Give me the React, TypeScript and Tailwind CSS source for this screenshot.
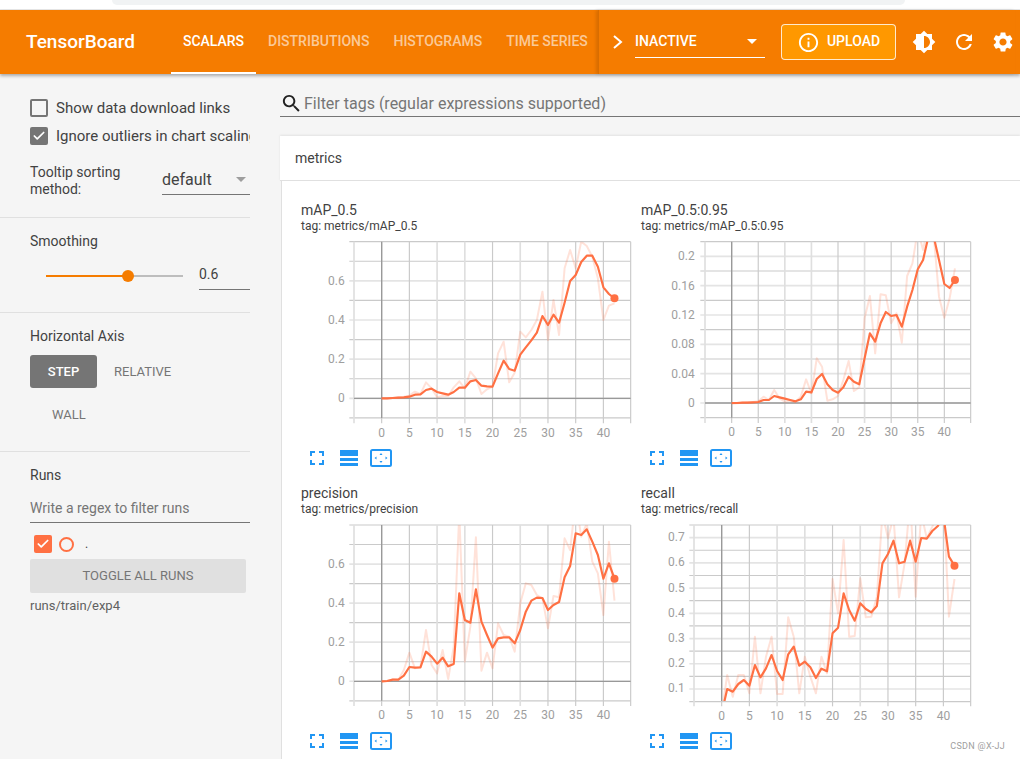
import { Check } from 'lucide-react'

const font = { fontFamily: 'Roboto, sans-serif' }

type ChartSpec = {
  title: string
  tag: string
  top: number
  x0: number
  step: number
  left: number
  right: number
  bottom: number
  gridTop: number
  gridGap: number
  gridCount: number
  xTicks: number[]
  yTicks: { label: string; y: number }[]
  smooth: number[]
  raw: number[]
}

const chartA: ChartSpec = {
  title: 'mAP_0.5',
  tag: 'tag: metrics/mAP_0.5',
  top: 150,
  x0: 275,
  step: 16.63,
  left: 192,
  right: 1022,
  bottom: 684,
  gridTop: 155,
  gridGap: 58.75,
  gridCount: 10,
  xTicks: [0, 5, 10, 15, 20, 25, 30, 35, 40],
  yTicks: [
    { label: '0.6', y: 273 },
    { label: '0.4', y: 391 },
    { label: '0.2', y: 508 },
    { label: '0', y: 625 },
  ],
  smooth: [625, 625, 624, 623, 622, 620, 614, 613, 600, 596, 606, 610, 614, 606, 593, 593, 574, 570, 587, 589, 590, 550, 512, 537, 542, 494, 472, 451, 428, 378, 405, 374, 398, 338, 273, 255, 216, 197, 197, 230, 292, 312, 325],
  raw: [625, 625, 624, 622, 620, 617, 605, 612, 577, 595, 622, 618, 618, 592, 574, 595, 545, 565, 612, 598, 590, 490, 455, 577, 548, 425, 442, 420, 390, 305, 450, 330, 435, 235, 180, 235, 155, 168, 200, 265, 390, 347, 340],
}

const chartB: ChartSpec = {
  title: 'mAP_0.5:0.95',
  tag: 'tag: metrics/mAP_0.5:0.95',
  top: 150,
  x0: 275,
  step: 15.95,
  left: 195,
  right: 992,
  bottom: 683,
  gridTop: 155,
  gridGap: 44,
  gridCount: 13,
  xTicks: [0, 5, 10, 15, 20, 25, 30, 35, 40],
  yTicks: [
    { label: '0.2', y: 199 },
    { label: '0.16', y: 287 },
    { label: '0.12', y: 375 },
    { label: '0.08', y: 463 },
    { label: '0.04', y: 551 },
    { label: '0', y: 639 },
  ],
  smooth: [639, 639, 638, 638, 637, 636, 630, 630, 618, 622, 626, 630, 634, 628, 605, 607, 567, 552, 583, 600, 608, 592, 560, 575, 583, 505, 430, 455, 400, 366, 378, 375, 410, 350, 300, 238, 210, 140, 140, 210, 282, 294, 270],
  raw: [641, 640, 638, 637, 636, 634, 620, 630, 600, 625, 635, 632, 636, 620, 568, 610, 505, 530, 632, 628, 618, 570, 513, 603, 592, 385, 318, 490, 313, 316, 400, 370, 458, 258, 220, 120, 180, 100, 135, 320, 383, 325, 235],
}

const chartC: ChartSpec = {
  title: 'precision',
  tag: 'tag: metrics/precision',
  top: 129,
  x0: 275,
  step: 16.63,
  left: 192,
  right: 1022,
  bottom: 662,
  gridTop: 135,
  gridGap: 58.6,
  gridCount: 10,
  xTicks: [0, 5, 10, 15, 20, 25, 30, 35, 40],
  yTicks: [
    { label: '0.6', y: 252 },
    { label: '0.4', y: 369 },
    { label: '0.2', y: 487 },
    { label: '0', y: 604 },
  ],
  smooth: [604, 603, 599, 599, 587, 561, 563, 562, 515, 530, 551, 533, 559, 552, 340, 420, 428, 328, 425, 465, 503, 475, 472, 472, 490, 450, 395, 362, 353, 354, 390, 375, 366, 292, 258, 160, 165, 148, 185, 225, 296, 250, 296],
  raw: [604, 603, 598, 600, 570, 518, 565, 560, 450, 555, 580, 510, 597, 500, 100, 545, 440, 172, 572, 518, 565, 430, 465, 470, 515, 370, 310, 315, 345, 355, 445, 348, 352, 175, 210, 60, 170, 130, 245, 280, 405, 185, 362],
}

const chartD: ChartSpec = {
  title: 'recall',
  tag: 'tag: metrics/recall',
  top: 129,
  x0: 245,
  step: 16.63,
  left: 162,
  right: 992,
  bottom: 663,
  gridTop: 135,
  gridGap: 37.85,
  gridCount: 15,
  xTicks: [0, 5, 10, 15, 20, 25, 30, 35, 40],
  yTicks: [
    { label: '0.7', y: 171 },
    { label: '0.6', y: 247 },
    { label: '0.5', y: 323 },
    { label: '0.4', y: 398 },
    { label: '0.3', y: 474 },
    { label: '0.2', y: 550 },
    { label: '0.1', y: 625 },
  ],
  smooth: [700, 627, 635, 612, 600, 617, 555, 592, 565, 525, 573, 600, 523, 500, 557, 545, 562, 594, 566, 574, 460, 443, 340, 390, 422, 370, 387, 397, 378, 250, 222, 182, 250, 245, 182, 245, 174, 176, 153, 138, 105, 230, 257],
  raw: [700, 585, 650, 585, 585, 640, 470, 640, 530, 470, 642, 642, 412, 470, 640, 530, 590, 640, 530, 580, 297, 400, 180, 470, 468, 295, 412, 410, 350, 100, 175, 110, 352, 250, 60, 350, 100, 175, 140, 100, 60, 410, 297],
}

// index into the vertical grid lines that come out pale and wide in the screenshot
const paleVerticals = [0, 3, 4, 6]

function Chart({ spec, second }: { spec: ChartSpec; second?: boolean }) {
  const xOf = (i: number) => spec.x0 + i * spec.step
  const toPoints = (values: number[]) => values.map((y, i) => `${xOf(i).toFixed(1)},${y}`).join(' ')
  const clipId = `clip-${spec.title.replace(/[^a-z0-9]/gi, '')}`
  const verticals = [spec.left, ...spec.xTicks.map((t) => xOf(t)), spec.right]
  const horizontals = Array.from({ length: spec.gridCount }, (_, i) => spec.gridTop + i * spec.gridGap)
  const labeled = spec.yTicks.map((t) => t.y)
  const last = spec.smooth.length - 1
  const lastLabel = labeled[labeled.length - 1]

  return (
    <div className="h-[283px]">
      <div className="pl-[10px] pt-[21px]">
        <div className="text-[14px] leading-[16px] text-[#424242]">{spec.title}</div>
        <div className="text-[12px] leading-[15px] mt-[1px] text-[#424242]">{spec.tag}</div>
      </div>
      <svg
        width={350}
        height={200}
        viewBox={`0 ${spec.top} 1050 600`}
        className={second ? 'block ml-[9px] mt-[6px]' : 'block -ml-[1px] mt-[6px]'}
      >
        <defs>
          <clipPath id={clipId}>
            <rect x={spec.left} y={spec.gridTop} width={spec.right - spec.left} height={spec.bottom - spec.gridTop} />
          </clipPath>
        </defs>
        {horizontals.map((y) => {
          const major = labeled.some((l) => Math.abs(l - y) < 3)
          return (
            <line
              key={y}
              x1={spec.left - 14}
              x2={spec.right}
              y1={y}
              y2={y}
              stroke={major ? '#e4e4e4' : '#cacaca'}
              strokeWidth={major ? 5 : 3.5}
            />
          )
        })}
        {verticals.map((x, i) => {
          const pale = paleVerticals.includes(i)
          return (
            <line
              key={x}
              x1={x}
              x2={x}
              y1={spec.gridTop}
              y2={spec.bottom + 16}
              stroke={pale ? '#dfdfdf' : '#cacaca'}
              strokeWidth={pale ? 5 : 3.5}
            />
          )
        })}
        <line x1={spec.x0} x2={spec.x0} y1={spec.gridTop} y2={spec.bottom} stroke="#999" strokeWidth={4} />
        {spec.title !== 'recall' && (
          <line x1={spec.left} x2={spec.right} y1={lastLabel} y2={lastLabel} stroke="#999" strokeWidth={4} />
        )}
        <g clipPath={`url(#${clipId})`}>
          <polyline points={toPoints(spec.raw)} fill="none" stroke="#ff7043" strokeOpacity={0.2} strokeWidth={6} strokeLinejoin="round" />
          <polyline points={toPoints(spec.smooth)} fill="none" stroke="#ff7043" strokeWidth={6.5} strokeLinejoin="round" />
        </g>
        <circle cx={xOf(last)} cy={spec.smooth[last]} r={12} fill="#ff7043" />
        {spec.yTicks.map((t) => (
          <text key={t.label} x={spec.x0 - 111} y={t.y + 12} textAnchor="end" fontSize={36} fill="#9e9e9e">
            {t.label}
          </text>
        ))}
        {spec.xTicks.map((t) => (
          <text key={t} x={xOf(t)} y={spec.bottom + 56} textAnchor="middle" fontSize={36} fill="#9e9e9e">
            {t}
          </text>
        ))}
      </svg>
      <div className="flex items-center pl-[19px] h-[20px] mt-[8px]">
        <svg width={14} height={14} viewBox="0 0 14 14" fill="none" stroke="#2196f3" strokeWidth={2}>
          <path d="M1 5V1h4M9 1h4v4M13 9v4H9M5 13H1V9" />
        </svg>
        <svg width={18} height={16} viewBox="0 0 18 16" fill="#2196f3" className="ml-[16px]">
          <rect x={0} y={0} width={18} height={6} />
          <rect x={0} y={8} width={18} height={3} />
          <rect x={0} y={13} width={18} height={3} />
        </svg>
        <svg width={22} height={18} viewBox="0 0 22 18" fill="none" className="ml-[12px]">
          <rect x={1} y={1} width={20} height={16} rx={1.5} stroke="#2196f3" strokeWidth={2} />
          <path d="M11 4l1.5 2h-3zM11 14l-1.5-2h3zM4.5 9l2-1.5v3zM17.5 9l-2 1.5v-3z" fill="#2196f3" />
        </svg>
      </div>
    </div>
  )
}

export default function App() {
  return (
    <div className="relative w-[1020px] h-[759px] overflow-hidden bg-[#f5f5f5]" style={font}>
      <div className="h-[10px] bg-white border-b border-[#e8e8e8] pl-[112px] pr-[115px]">
        <div className="h-[5px] bg-[#f1f3f4] rounded-b-[10px]" />
      </div>

      <header className="relative z-10 h-[64px] bg-[#f57c00] text-white flex items-center shadow-[0_2px_3px_rgba(0,0,0,0.3)]">
        <div className="text-[19px] font-medium pl-[26px] w-[171px]">TensorBoard</div>
        <nav className="flex h-full text-[14px] font-medium w-[427px]">
          <div className="relative w-[85px] flex items-center justify-center pb-[2px]">
            SCALARS
            <div className="absolute left-0 right-0 bottom-0 h-[2px] bg-white" />
          </div>
          <div className="ml-[12px] flex items-center pb-[2px] text-white/60">DISTRIBUTIONS</div>
          <div className="ml-[24px] flex items-center pb-[2px] text-white/60">HISTOGRAMS</div>
          <div className="ml-[24px] flex items-center pb-[2px] text-white/60">TIME SERIES</div>
        </nav>
        <div className="h-full flex items-center border-l border-[#d96d00] shadow-[-2px_0_3px_rgba(0,0,0,0.12)] pl-[12px]">
          <svg width={14} height={16} viewBox="0 0 14 16" fill="none" stroke="white" strokeWidth={2}>
            <path d="M3 2l7 6-7 6" />
          </svg>
          <div className="ml-[10px] w-[130px] h-[32px] border-b border-white flex items-center justify-between pr-[4px] text-[14px] font-medium mb-[1px]">
            INACTIVE
            <div className="w-0 h-0 border-l-[5px] border-r-[5px] border-t-[5px] border-l-transparent border-r-transparent border-t-white mr-[4px]" />
          </div>
          <button className="ml-[16px] w-[115px] h-[36px] bg-[#ff9800] border border-white/80 rounded-[4px] flex items-center justify-center gap-[7px] text-[14px] font-medium">
            <svg width={23} height={23} viewBox="0 0 24 24" fill="white">
              <path d="M11 7h2v2h-2zm0 4h2v6h-2zm1-9C6.48 2 2 6.48 2 12s4.48 10 10 10 10-4.48 10-10S17.52 2 12 2zm0 18c-4.41 0-8-3.59-8-8s3.59-8 8-8 8 3.59 8 8-3.59 8-8 8z" />
            </svg>
            <span className="pb-[2px]">UPLOAD</span>
          </button>
          <svg width={24} height={24} viewBox="0 0 24 24" fill="white" className="ml-[16px]">
            <path d="M20 15.31L23.31 12 20 8.69V4h-4.69L12 .69 8.69 4H4v4.69L.69 12 4 15.31V20h4.69L12 23.31 15.31 20H20v-4.69zM12 18V6c3.31 0 6 2.69 6 6s-2.69 6-6 6z" />
          </svg>
          <svg width={24} height={24} viewBox="0 0 24 24" fill="white" className="ml-[16px]">
            <path d="M17.65 6.35C16.2 4.9 14.21 4 12 4c-4.42 0-7.99 3.58-7.99 8s3.57 8 7.99 8c3.73 0 6.84-2.55 7.73-6h-2.08c-.82 2.33-3.04 4-5.65 4-3.31 0-6-2.69-6-6s2.69-6 6-6c1.66 0 3.14.69 4.22 1.78L13 11h7V4l-2.35 2.35z" />
          </svg>
          <svg width={24} height={24} viewBox="0 0 24 24" fill="white" className="ml-[15px] shrink-0">
            <path d="M19.14 12.94c.04-.3.06-.61.06-.94 0-.32-.02-.64-.07-.94l2.03-1.58c.18-.14.23-.41.12-.61l-1.92-3.32c-.12-.22-.37-.29-.59-.22l-2.39.96c-.5-.38-1.03-.7-1.62-.94l-.36-2.54c-.04-.24-.24-.41-.48-.41h-3.84c-.24 0-.43.17-.47.41l-.36 2.54c-.59.24-1.13.57-1.62.94l-2.39-.96c-.22-.08-.47 0-.59.22L2.74 8.87c-.12.21-.08.47.12.61l2.03 1.58c-.05.3-.09.63-.09.94s.02.64.07.94l-2.03 1.58c-.18.14-.23.41-.12.61l1.92 3.32c.12.22.37.29.59.22l2.39-.96c.5.38 1.03.7 1.62.94l.36 2.54c.05.24.24.41.48.41h3.84c.24 0 .44-.17.47-.41l.36-2.54c.59-.24 1.13-.56 1.62-.94l2.39.96c.22.08.47 0 .59-.22l1.92-3.32c.12-.22.07-.47-.12-.61l-2.01-1.58zM12 15.6c-1.98 0-3.6-1.62-3.6-3.6s1.62-3.6 3.6-3.6 3.6 1.62 3.6 3.6-1.62 3.6-3.6 3.6z" />
          </svg>
        </div>
      </header>

      <div className="flex h-[685px]">
        <aside className="w-[250px] shrink-0 text-[#424242] text-[14px]">
          <div className="pl-[30px] pt-[25px] h-[144px] border-b border-[#e0e0e0]">
            <div className="flex items-center h-[18px] gap-[8px]">
              <div className="w-[18px] h-[18px] border-2 border-[#757575] rounded-[2px]" />
              <span className="text-[15px]">Show data download links</span>
            </div>
            <div className="flex items-center h-[18px] gap-[8px] mt-[10px] overflow-hidden">
              <div className="w-[18px] h-[18px] bg-[#757575] rounded-[2px] flex items-center justify-center shrink-0">
                <Check size={14} color="white" strokeWidth={3} />
              </div>
              <span className="text-[15px] whitespace-nowrap">Ignore outliers in chart scaling</span>
            </div>
            <div className="flex mt-[17px]">
              <div className="w-[132px] text-[14px] leading-[17px] pt-[2px]">
                Tooltip sorting
                <br />
                method:
              </div>
              <div className="w-[88px] h-[32px] border-b border-[#757575] flex items-center justify-between pr-[4px] text-[16px] mt-[1px] pt-[2px]">
                default
                <div className="w-0 h-0 border-l-[5px] border-r-[5px] border-t-[5px] border-l-transparent border-r-transparent border-t-[#9e9e9e]" />
              </div>
            </div>
          </div>

          <div className="pl-[30px] pt-[15px] h-[95px] border-b border-[#e0e0e0]">
            <div className="leading-[16px] text-[14px]">Smoothing</div>
            <div className="flex items-center mt-[13px]">
              <div className="relative ml-[16px] w-[137px] h-[2px] bg-[#bdbdbd]">
                <div className="h-full w-[82px] bg-[#f57c00]" />
                <div className="absolute left-[76px] top-[-5px] w-[12px] h-[12px] rounded-full bg-[#f57c00]" />
              </div>
              <div className="ml-[16px] w-[51px] h-[28px] border-b border-[#757575] text-[14px] leading-[24px]">0.6</div>
            </div>
          </div>

          <div className="pl-[30px] pt-[15px] h-[139px] border-b border-[#e0e0e0]">
            <div className="leading-[16px] text-[14px]">Horizontal Axis</div>
            <div className="flex items-center mt-[11px] text-[13px] font-medium">
              <div className="w-[67px] h-[33px] bg-[#757575] rounded-[3px] text-white flex items-center justify-center">STEP</div>
              <div className="ml-[17px] text-[#757575] font-normal">RELATIVE</div>
            </div>
            <div className="ml-[22px] mt-[19px] text-[13px] leading-[16px] text-[#757575]">WALL</div>
          </div>

          <div className="pl-[30px] pt-[15px]">
            <div className="leading-[16px] text-[14px]">Runs</div>
            <div className="w-[220px] h-[32px] mt-[8px] border-b border-[#757575] text-[14px] leading-[34px] text-[#757575]">
              Write a regex to filter runs
            </div>
            <div className="flex items-center mt-[12px] ml-[4px]">
              <div className="w-[18px] h-[18px] bg-[#ff7043] rounded-[2px] flex items-center justify-center">
                <Check size={14} color="white" strokeWidth={3} />
              </div>
              <div className="ml-[7px] w-[15px] h-[15px] rounded-full border-2 border-[#ff7043]" />
              <span className="ml-[11px] text-[12px]">.</span>
            </div>
            <div className="w-[216px] h-[34px] mt-[6px] bg-[#e0e0e0] rounded-[2px] text-[13px] text-[#757575] flex items-center justify-center">
              TOGGLE ALL RUNS
            </div>
            <div className="mt-[5px] text-[13px] leading-[16px] text-[#616161]">runs/train/exp4</div>
          </div>
        </aside>

        <main className="flex-1 min-w-0 pl-[30px] relative">
          <div className="h-[33px] mt-[10px] border-b border-[#757575] flex items-center gap-[1px] pt-[7px]">
            <svg width={23} height={23} viewBox="0 0 24 24" fill="#212121">
              <path d="M15.5 14h-.79l-.28-.27C15.41 12.59 16 11.11 16 9.5 16 5.91 13.09 3 9.5 3S3 5.91 3 9.5 5.91 16 9.5 16c1.61 0 3.09-.59 4.23-1.57l.27.28v.79l5 4.99L20.49 19l-4.99-5zm-6 0C7.01 14 5 11.99 5 9.5S7.01 5 9.5 5 14 7.01 14 9.5 11.99 14 9.5 14z" />
            </svg>
            <span className="text-[16px] text-[#757575]">Filter tags (regular expressions supported)</span>
          </div>
          <div className="mt-[19px] h-[45px] bg-white border-b border-[#e0e0e0] shadow-[0_-1px_2px_rgba(0,0,0,0.08)] pl-[15px] pt-[1px] flex items-center text-[14px] text-[#424242]">
            metrics
          </div>
          <div className="ml-[1px] h-[600px] bg-white grid grid-cols-[340px_340px] grid-rows-[283px_283px] pl-[9px] border-l border-[#e0e0e0]">
            <Chart spec={chartA} />
            <Chart spec={chartB} second />
            <Chart spec={chartC} />
            <Chart spec={chartD} second />
          </div>
        </main>
      </div>

      <div className="absolute right-[15px] top-[740px] text-[9px] leading-[12px] tracking-[0.3px] text-[#9e9e9e]">CSDN @X-JJ</div>
    </div>
  )
}
